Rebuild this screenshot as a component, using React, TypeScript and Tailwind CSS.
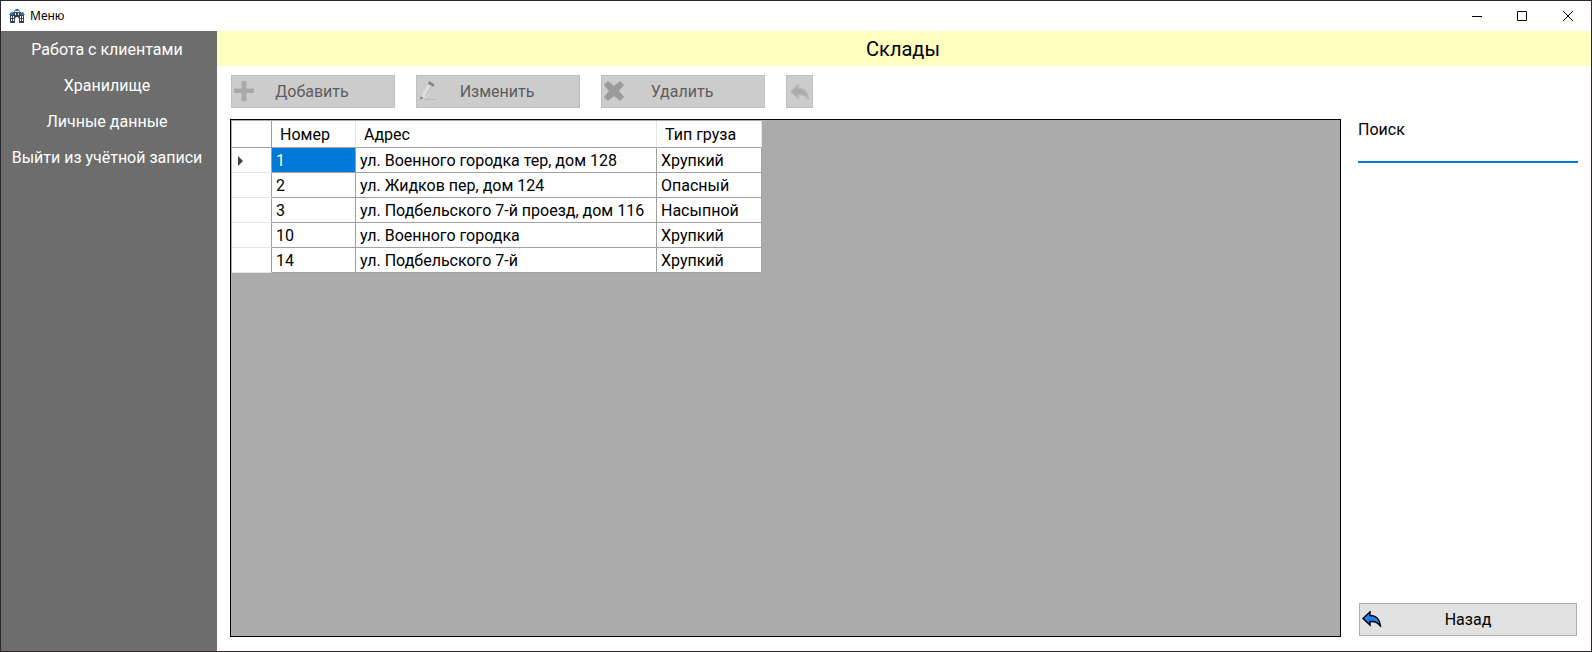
import { useState } from "react";
import type { ReactNode } from "react";

const menu = ["Работа с клиентами", "Хранилище", "Личные данные", "Выйти из учётной записи"];

const rows = [
  { id: 1, address: "ул. Военного городка тер, дом 128", cargo: "Хрупкий" },
  { id: 2, address: "ул. Жидков пер, дом 124", cargo: "Опасный" },
  { id: 3, address: "ул. Подбельского 7-й проезд, дом 116", cargo: "Насыпной" },
  { id: 10, address: "ул. Военного городка", cargo: "Хрупкий" },
  { id: 14, address: "ул. Подбельского 7-й", cargo: "Хрупкий" },
];

function AppIcon() {
  return (
    <svg viewBox="0 0 16 16" className="size-4" aria-hidden="true">
      <path d="M1 6h5v9H1zM10 6h5v9h-5z" fill="#38404f" />
      <path d="M4 4h8v11h-2v-4a2 2 0 0 0-4 0v4H4z" fill="#38404f" />
      <path d="M0 7 2 4l3 1V3l2-2h2l2 2v2l3-1 2 3h-4l-1-2-1-2H6L5 5 4 7z" fill="#2674b8" />
      <path d="M6 5h1v2H6zM9 5h1v2H9zM2 8h1v2H2zM4 8h1v2H4zM11 8h1v2h-1zM13 8h1v2h-1zM2 11h1v2H2zM4 11h1v2H4zM11 11h1v2h-1zM13 11h1v2h-1z" fill="#fff" />
    </svg>
  );
}

function PlusIcon() {
  return (
    <svg viewBox="0 0 20 20" className="size-5" aria-hidden="true">
      <path d="M7.500 0h5v7.500H20v4.500h-7.500v8h-5v-8H0V7.500h7.500z" fill="#a9a9a9" />
    </svg>
  );
}

function PencilIcon() {
  return (
    <svg viewBox="0 0 20 20" className="size-5" aria-hidden="true">
      <path d="M5 18.500h12" stroke="#b8b8b8" strokeWidth="1" />
      <path d="m3 13 6-10 5 3-6 10-5 2z" fill="#dcdcdc" />
      <path d="m7 16 7-10-2-1-6 10z" fill="#c2c2c2" />
      <path d="m9 3 1-3 5 3v3l-2-1z" fill="#858585" />
      <path d="m1 18.500 1-3 2.500 1.500z" fill="#777" />
    </svg>
  );
}

function CrossIcon() {
  return (
    <svg viewBox="0 0 20 20" className="size-5" aria-hidden="true">
      <path d="m4 0 6 5 6-5 4 4-5 6 5 6-4 4-6-5-6 5-4-4 5-6-5-6z" fill="#9b9b9b" />
    </svg>
  );
}

function BackIcon({ fill, stroke }: { fill: string; stroke: string }) {
  return (
    <svg viewBox="0 0 20 16" className="h-4 w-5" aria-hidden="true">
      <path
        d="M1 7.500 8 1v3.500c6 0 10 4 10.500 10.500-2.500-3.500-6-5-10.500-4.500V14z"
        fill={fill}
        stroke={stroke}
        strokeWidth="1.500"
      />
    </svg>
  );
}

function ToolButton({ icon, label }: { icon: ReactNode; label: string }) {
  return (
    <button
      type="button"
      disabled
      className="flex h-[33px] w-[164px] items-center border border-[#bfbfbf] bg-[#cccccc] pb-px pl-0.5 text-[#5c5c5c]"
    >
      {icon}
      <span className="flex-1 pt-0.5 pr-6 text-center">{label}</span>
    </button>
  );
}

function TitleBar() {
  return (
    <header className="flex h-[30px] items-center justify-between bg-white pl-2">
      <div className="flex items-center gap-[5px]">
        <AppIcon />
        <span className="font-['Noto_Sans',sans-serif] text-xs">Меню</span>
      </div>
      <div className="flex h-full">
        <button type="button" aria-label="Свернуть" className="grid w-[45px] place-items-center">
          <svg viewBox="0 0 10 10" className="size-2.5"><path d="M0 5.500h10" stroke="#000" /></svg>
        </button>
        <button type="button" aria-label="Развернуть" className="grid w-[45px] place-items-center">
          <svg viewBox="0 0 10 10" className="size-2.5"><path d="M.5.500h9v9h-9z" fill="none" stroke="#000" /></svg>
        </button>
        <button type="button" aria-label="Закрыть" className="grid w-[47px] place-items-center">
          <svg viewBox="0 0 10 10" className="size-2.5"><path d="m0 0 10 10M10 0 0 10" stroke="#000" /></svg>
        </button>
      </div>
    </header>
  );
}

function Grid() {
  return (
    <div className="flex-1 border border-black bg-[#ababab] pt-px pl-px">
      <table className="border-separate border-spacing-0 bg-white text-left">
        <thead>
          <tr className="h-[27px]">
            <th className="w-10 border-r border-b border-[#a0a0a0]" />
            <th className="w-[84px] border-r border-b border-r-[#e5e5e5] border-b-[#a0a0a0] pt-0.5 pl-2 font-normal">Номер</th>
            <th className="w-[301px] border-r border-b border-r-[#e5e5e5] border-b-[#a0a0a0] pt-0.5 pl-2 font-normal">Адрес</th>
            <th className="w-[105px] border-r border-b border-r-[#e5e5e5] border-b-[#a0a0a0] pt-0.5 pl-2 font-normal">Тип груза</th>
          </tr>
        </thead>
        <tbody>
          {rows.map((row, i) => (
            <tr key={row.id} className="h-[25px]">
              <td className="border-r border-b border-r-[#a0a0a0] border-b-[#e5e5e5] pt-0.5 pl-1.5">
                {i === 0 && (
                  <svg viewBox="0 0 5 10" className="h-2.5 w-[5px]" aria-hidden="true">
                    <path d="M0 0v10l5-5z" fill="#404040" />
                  </svg>
                )}
              </td>
              <td
                className={
                  i === 0
                    ? "border-r border-b border-[#a0a0a0] bg-[#0078d7] pt-0.5 pl-1 text-white"
                    : "border-r border-b border-[#a0a0a0] pt-0.5 pl-1"
                }
              >
                {row.id}
              </td>
              <td className="border-r border-b border-[#a0a0a0] pt-0.5 pl-1 whitespace-nowrap">{row.address}</td>
              <td className="border-r border-b border-[#a0a0a0] pt-0.5 pl-1">{row.cargo}</td>
            </tr>
          ))}
        </tbody>
      </table>
    </div>
  );
}

export default function App() {
  const [query, setQuery] = useState("");
  return (
    <div className="flex min-h-screen flex-col border border-[#2a2629] bg-white font-[Roboto,sans-serif] text-base leading-5 text-black">
      <TitleBar />
      <div className="flex flex-1">
        <nav className="flex w-[216px] shrink-0 flex-col bg-[#6d6d6d] text-white">
          {menu.map((item) => (
            <button key={item} type="button" className="h-9 pt-0.5 pr-1 text-center whitespace-nowrap">
              {item}
            </button>
          ))}
        </nav>
        <main className="flex flex-1 flex-col">
          <h1 className="flex h-[35px] items-center justify-center bg-[#ffffc0] pr-0.5 text-xl">Склады</h1>
          <div className="flex flex-1 flex-col gap-[11px] pt-[9px] pr-[13px] pb-3.5 pl-[13px]">
            <div className="flex gap-[21px] pl-px">
              <ToolButton icon={<PlusIcon />} label="Добавить" />
              <ToolButton icon={<PencilIcon />} label="Изменить" />
              <ToolButton icon={<CrossIcon />} label="Удалить" />
              <button
                type="button"
                disabled
                aria-label="Отменить"
                className="grid h-[33px] w-[27px] place-items-center border border-[#bfbfbf] bg-[#cccccc]"
              >
                <BackIcon fill="#ababab" stroke="#b5b5b5" />
              </button>
            </div>
            <div className="flex flex-1 gap-[17px]">
              <Grid />
              <aside className="flex w-[220px] flex-col justify-between pb-px">
                <div className="flex flex-col pt-px">
                  <label htmlFor="search">Поиск</label>
                  <input
                    id="search"
                    value={query}
                    onChange={(e) => setQuery(e.target.value)}
                    className="h-[23px] border-b-2 border-[#0078d7] outline-none"
                  />
                </div>
                <button
                  type="button"
                  className="mx-px flex h-[33px] items-center border border-[#adadad] bg-[#e1e1e1] pr-0.5 pb-px pl-0.5"
                >
                  <BackIcon fill="#1e82f5" stroke="#000" />
                  <span className="flex-1 pt-0.5 pr-5 text-center">Назад</span>
                </button>
              </aside>
            </div>
          </div>
        </main>
      </div>
    </div>
  );
}
